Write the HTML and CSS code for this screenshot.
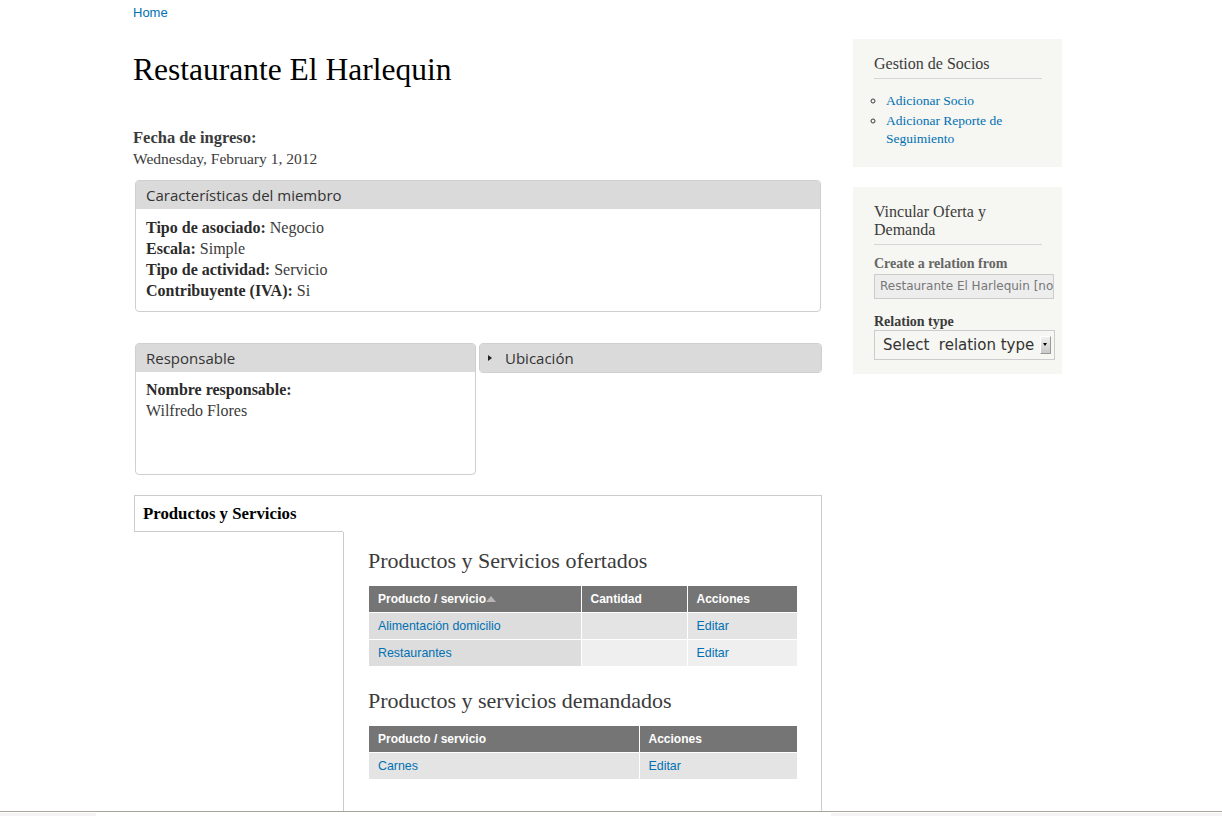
FILE: index.html
```html
<!DOCTYPE html>
<html lang="es">
<head>
<meta charset="utf-8">
<title>Restaurante El Harlequin</title>
<link rel="stylesheet" href="styles.css">
</head>
<body>
<div class="page">
  <div class="breadcrumb"><a href="#">Home</a></div>
  <div class="layout">
    <main class="main">
      <h1 class="title">Restaurante El Harlequin</h1>

      <div class="field-date">
        <div class="field-label">Fecha de ingreso:</div>
        <div class="field-value">Wednesday, February 1, 2012</div>
      </div>

      <section class="panel panel-full">
        <div class="panel-head">Características del miembro</div>
        <div class="panel-body">
          <div><strong>Tipo de asociado:</strong> Negocio</div>
          <div><strong>Escala:</strong> Simple</div>
          <div><strong>Tipo de actividad:</strong> Servicio</div>
          <div><strong>Contribuyente (IVA):</strong> Si</div>
        </div>
      </section>

      <div class="panel-row">
        <section class="panel panel-resp">
          <div class="panel-head">Responsable</div>
          <div class="panel-body tall">
            <div><strong>Nombre responsable:</strong></div>
            <div>Wilfredo Flores</div>
          </div>
        </section>
        <section class="panel panel-collapsed">
          <div class="panel-head"><span class="arrow"></span>Ubicación</div>
        </section>
      </div>

      <div class="vtabs">
        <ul class="vtab-list">
          <li class="vtab active">Productos y Servicios</li>
        </ul>
        <div class="vtab-pane">
          <h2 class="pane-title">Productos y Servicios ofertados</h2>
          <table class="data t1">
            <colgroup><col class="c1"><col class="c2"><col class="c3"></colgroup>
            <thead>
              <tr><th>Producto / servicio<span class="sort"></span></th><th>Cantidad</th><th>Acciones</th></tr>
            </thead>
            <tbody>
              <tr class="odd"><td class="active"><a href="#">Alimentación domicilio</a></td><td></td><td><a href="#">Editar</a></td></tr>
              <tr class="even"><td class="active"><a href="#">Restaurantes</a></td><td></td><td><a href="#">Editar</a></td></tr>
            </tbody>
          </table>

          <h2 class="pane-title second">Productos y servicios demandados</h2>
          <table class="data t2">
            <colgroup><col class="d1"><col class="d2"></colgroup>
            <thead>
              <tr><th>Producto / servicio</th><th>Acciones</th></tr>
            </thead>
            <tbody>
              <tr class="odd"><td><a href="#">Carnes</a></td><td><a href="#">Editar</a></td></tr>
            </tbody>
          </table>
          <div class="pane-spacer"></div>
        </div>
      </div>
    </main>

    <aside class="sidebar">
      <section class="block">
        <h2 class="block-title">Gestion de Socios</h2>
        <ul class="block-list">
          <li><a href="#">Adicionar Socio</a></li>
          <li><a href="#">Adicionar Reporte de Seguimiento</a></li>
        </ul>
      </section>
      <section class="block block-form">
        <h2 class="block-title">Vincular Oferta y Demanda</h2>
        <div class="form-label muted">Create a relation from</div>
        <div class="fake-input">Restaurante El Harlequin [nod:1]</div>
        <div class="form-label second">Relation type</div>
        <div class="fake-select"><span class="sel-text">Select&nbsp; relation type</span><span class="sel-btn"></span></div>
      </section>
    </aside>
  </div>
</div>

<div class="bottom-bar">
  <span class="bb-left"></span>
  <span class="bb-right"></span>
</div>
</body>
</html>
```

FILE: styles.css
```css
html, body {
  margin: 0;
  padding: 0;
  background: #fff;
}

body {
  font-family: "Liberation Serif", "Times New Roman", serif;
  color: #3b3b3b;
  font-size: 15px;
}

a {
  color: #0071b3;
  text-decoration: none;
}

.page {
  width: 956px;
  margin: 0 auto;
}

.breadcrumb {
  font-family: "Liberation Sans", Arial, sans-serif;
  font-size: 13px;
  line-height: 15px;
  padding-top: 5px;
}

.layout {
  display: grid;
  grid-template-columns: 689px 209px;
  column-gap: 31px;
  align-items: start;
}

/* ---------- main ---------- */
.title {
  font-family: "Liberation Serif", Georgia, serif;
  font-weight: normal;
  color: #000;
  font-size: 31.5px;
  line-height: 36px;
  margin: 32px 0 0 0;
}

.field-date {
  margin-top: 39px;
  line-height: 21px;
  font-size: 15.5px;
}

.field-label {
  font-weight: bold;
  font-size: 16.5px;
}

.panel {
  border: 1px solid #cfcfcf;
  border-radius: 4px;
  background: #fff;
  overflow: hidden;
}

.panel-full {
  margin: 11px 1px 0 2px;
}

.panel-head {
  background: #dadada;
  height: 28px;
  line-height: 28px;
  padding-left: 10px;
  font-family: "Open Sans", "DejaVu Sans", sans-serif;
  font-size: 15px;
  color: #333;
  display: flex;
  align-items: center;
}

.panel-body {
  padding: 8px 10px 10px 10px;
  line-height: 21px;
  font-size: 16px;
  color: #3b3b3b;
}

.panel-body strong {
  color: #2b2b2b;
}

.panel-body.tall {
  height: 87px;
  padding-top: 7px;
  padding-bottom: 8px;
}

.panel-row {
  display: grid;
  grid-template-columns: 341px 343px;
  column-gap: 3px;
  margin: 31px 1px 0 2px;
  align-items: start;
}

.panel-collapsed .panel-head {
  padding-left: 8px;
}

.arrow {
  width: 0;
  height: 0;
  border-top: 3.5px solid transparent;
  border-bottom: 3.5px solid transparent;
  border-left: 4px solid #222;
  margin-right: 13px;
}

/* ---------- vertical tabs ---------- */
.vtabs {
  margin: 20px 0 0 1px;
  border-top: 1px solid #cccccc;
  border-right: 1px solid #cccccc;
  display: grid;
  grid-template-columns: 209px 1fr;
  align-items: start;
}

.vtab-list {
  list-style: none;
  margin: 0;
  padding: 0;
}

.vtab {
  height: 35px;
  line-height: 35px;
  padding-left: 8px;
  border-left: 1px solid #cccccc;
  border-bottom: 1px solid #cccccc;
  font-weight: bold;
  font-size: 16.8px;
  color: #000;
}

.vtab-pane {
  margin-top: 36px;
  border-left: 1px solid #cccccc;
  padding: 0 24px 0 24px;
}

.pane-title {
  font-family: "Liberation Serif", Georgia, serif;
  font-weight: normal;
  font-size: 22px;
  line-height: 26px;
  color: #3b3b3b;
  margin: 16px 0 12px 0;
}

.pane-title.second {
  margin-top: 21px;
}

.data {
  border-collapse: collapse;
  margin-left: 1px;
  font-family: "Liberation Sans", Arial, sans-serif;
  font-size: 12px;
  table-layout: fixed;
}

.t1 { width: 428px; }
.t1 .c1 { width: 212px; }
.t1 .c2 { width: 106px; }
.t1 .c3 { width: 110px; }

.t2 { width: 428px; }
.t2 .d1 { width: 270px; }
.t2 .d2 { width: 158px; }

.data th {
  background: #757575;
  color: #fff;
  text-align: left;
  font-weight: bold;
  height: 26px;
  padding: 0 9px;
  border-bottom: 1px solid #fff;
  border-left: 1px solid #fff;
}

.data td {
  height: 26px;
  padding: 0 9px;
  font-size: 12.4px;
  border-bottom: 1px solid #fff;
  border-left: 1px solid #fff;
}

.data th:first-child,
.data td:first-child {
  border-left: none;
}

.data tr.odd td { background: #e4e4e4; }
.data tr.even td { background: #efefef; }
.data td.active { background: #dddddd !important; }

.sort {
  display: inline-block;
  width: 0;
  height: 0;
  border-left: 5px solid transparent;
  border-right: 5px solid transparent;
  border-bottom: 6px solid #b5b5b5;
  vertical-align: 1px;
}

.pane-spacer {
  height: 60px;
}

/* ---------- sidebar ---------- */
.sidebar {
  margin-top: 19px;
  display: flex;
  flex-direction: column;
  gap: 20px;
}

.block {
  background: #f6f6f2;
  padding: 16px 20px 17px 21px;
}

.block-title {
  font-family: "Liberation Serif", Georgia, serif;
  font-weight: normal;
  font-size: 16px;
  line-height: 18px;
  color: #3b3b3b;
  margin: 0;
  padding-bottom: 5px;
  border-bottom: 1px solid #d6d6d6;
}

.block-list {
  list-style: circle;
  margin: 13px 0 0 0;
  padding-left: 12px;
  font-size: 13.5px;
  line-height: 18px;
}

.block-list li {
  margin-bottom: 2px;
}

.block-form {
  padding-top: 16px;
  padding-bottom: 14px;
}

.block-form .block-title {
  padding-bottom: 5px;
}

.form-label {
  font-weight: bold;
  font-size: 14px;
  line-height: 16px;
  color: #3b3b3b;
  margin-top: 11px;
}

.form-label.muted {
  color: #666;
}

.form-label.second {
  margin-top: 15px;
}

.fake-input {
  margin-top: 2px;
  width: 180px;
  box-sizing: border-box;
  height: 25px;
  line-height: 23px;
  border: 1px solid #cccccc;
  background: #ededed;
  color: #777;
  font-family: "DejaVu Sans", Verdana, sans-serif;
  font-size: 12px;
  padding-left: 5px;
  white-space: nowrap;
  overflow: hidden;
}

.fake-select {
  width: 181px;
  box-sizing: border-box;
  height: 30px;
  border: 1px solid #cccccc;
  background: #f6f6f2;
  display: flex;
  align-items: center;
  justify-content: space-between;
  padding: 0 3px 0 8px;
  font-family: "DejaVu Sans", Verdana, sans-serif;
  font-size: 15px;
  color: #333;
  white-space: nowrap;
}

.sel-btn {
  position: relative;
  width: 11px;
  height: 18px;
  box-sizing: border-box;
  background: linear-gradient(#f0f0f0, #c8c8c8);
  border: 1px solid #9a9a9a;
  border-top-color: #fff;
  border-left-color: #fff;
}

.sel-btn::after {
  content: "";
  position: absolute;
  left: 2px;
  top: 6px;
  border-left: 2.5px solid transparent;
  border-right: 2.5px solid transparent;
  border-top: 3px solid #000;
}

/* ---------- bottom overlay bar ---------- */
.bottom-bar {
  position: fixed;
  left: 0;
  right: 0;
  bottom: 0;
  height: 4px;
  border-top: 1px solid #a8a59d;
  background: #fff;
}

.bb-left,
.bb-right {
  position: absolute;
  top: 1px;
  bottom: 0;
  background: #f5f4f2;
}

.bb-left { left: 0; width: 96px; }
.bb-right { left: 831px; right: 0; }
```
